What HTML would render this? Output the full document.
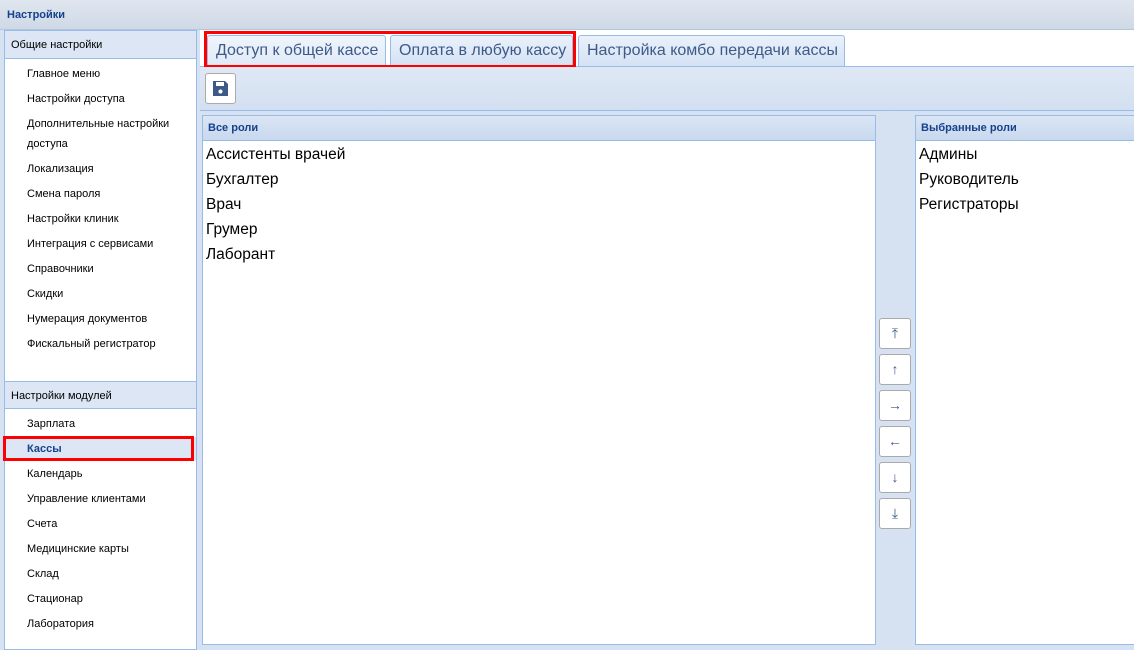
<!DOCTYPE html>
<html><head><meta charset="utf-8"><style>
*{box-sizing:border-box;margin:0;padding:0}
body{width:1134px;height:638px;overflow:hidden;background:#d6e2f1;font-family:"Liberation Sans",sans-serif;position:relative}
.abs{position:absolute}
.title{left:0;top:0;width:1134px;height:30px;background:linear-gradient(#dfe6ef,#cfd9e6);border-bottom:1px solid #b6c6da}
.title span{position:absolute;left:7px;top:9px;font-size:11px;font-weight:bold;color:#15428b}
.left{left:4px;top:30px;width:193px;height:620px;background:#fff;border:1px solid #99bbe8}
.hdr{position:absolute;left:0;width:191px;height:28px;background:#dce6f4;border-bottom:1px solid #99bbe8;font-size:11px;color:#000;padding:8px 0 0 6px}
.it{position:absolute;left:22px;font-size:11px;color:#000}
.tabbar{left:200px;top:30px;width:934px;height:37px;background:#fff;border-bottom:1px solid #99bbe8}
.tab{position:absolute;top:5px;height:31px;background:linear-gradient(#eaf1fb,#d4e2f4);border:1px solid #99bbe8;border-bottom:none;border-radius:3px 3px 0 0;font-size:16px;color:#3d5a87;padding:6px 0 0 8px;white-space:nowrap}
.tb{left:200px;top:67px;width:934px;height:44px;background:linear-gradient(#dfe8f5,#d3e0f1);border-bottom:1px solid #99bbe8}
.grid{background:#fff;border:1px solid #99bbe8}
.gh{height:25px;background:linear-gradient(#dbe6f5,#c8d8ee);border-bottom:1px solid #99bbe8;font-size:11px;font-weight:bold;color:#15428b;padding:6px 0 0 5px}
.row{font-size:15.5px;color:#000;padding-left:3px;height:25px;line-height:25px}
.btn{position:absolute;left:879px;width:32px;height:31px;background:#fff;border:1px solid #aaa;border-radius:3px;color:#3d5a87;font-size:14px;text-align:center;line-height:29px}
.red{border:3px solid #f00}
</style></head><body>
<div class="abs title"><span>Настройки</span></div>
<div class="abs left">
<div class="hdr" style="top:0">Общие настройки</div>
<div class="it" style="top:37px">Главное меню</div>
<div class="it" style="top:62px">Настройки доступа</div>
<div class="it" style="line-height:20px;top:83px">Дополнительные настройки<br>доступа</div>
<div class="it" style="top:132px">Локализация</div>
<div class="it" style="top:157px">Смена пароля</div>
<div class="it" style="top:182px">Настройки клиник</div>
<div class="it" style="top:207px">Интеграция с сервисами</div>
<div class="it" style="top:232px">Справочники</div>
<div class="it" style="top:257px">Скидки</div>
<div class="it" style="top:282px">Нумерация документов</div>
<div class="it" style="top:307px">Фискальный регистратор</div>
<div class="hdr" style="top:350px;border-top:1px solid #99bbe8">Настройки модулей</div>
<div class="it" style="top:387px">Зарплата</div>
<div style="position:absolute;left:0;top:406px;width:191px;height:24px;background:#dce6f4"></div>
<div class="it" style="top:412px;font-weight:bold;color:#15428b">Кассы</div>
<div class="it" style="top:437px">Календарь</div>
<div class="it" style="top:462px">Управление клиентами</div>
<div class="it" style="top:487px">Счета</div>
<div class="it" style="top:512px">Медицинские карты</div>
<div class="it" style="top:537px">Склад</div>
<div class="it" style="top:562px">Стационар</div>
<div class="it" style="top:587px">Лаборатория</div>
</div>
<div class="abs red" style="left:3px;top:436px;width:191px;height:25px"></div>
<div class="abs tabbar">
<div class="tab" style="left:7px;width:179px;background:linear-gradient(#f0f5fc,#dfe9f7)">Доступ к общей кассе</div>
<div class="tab" style="left:190px;width:183px">Оплата в любую кассу</div>
<div class="tab" style="left:378px;width:267px">Настройка комбо передачи кассы</div>
</div>
<div class="abs red" style="left:204px;top:31px;width:372px;height:37px"></div>
<div class="abs tb"><div style="position:absolute;left:5px;top:6px;width:31px;height:31px;background:#fff;border:1px solid #aaa;border-radius:3px">
<svg width="29" height="29" viewBox="0 0 29 29"><path d="M7 7h12l3 3v12H7z" fill="#3d5a87"/><rect x="10" y="8" width="8" height="4" fill="#fff"/><circle cx="14.5" cy="17.5" r="2" fill="#fff"/></svg></div></div>
<div class="abs grid" style="left:202px;top:115px;width:674px;height:530px"><div class="gh">Все роли</div>
<div style="padding-top:1px"><div class="row">Ассистенты врачей</div><div class="row">Бухгалтер</div><div class="row">Врач</div><div class="row">Грумер</div><div class="row">Лаборант</div></div></div>
<div class="abs grid" style="left:915px;top:115px;width:225px;height:530px"><div class="gh">Выбранные роли</div>
<div style="padding-top:1px"><div class="row">Админы</div><div class="row">Руководитель</div><div class="row">Регистраторы</div></div></div>
<div class="btn" style="top:318px">⤒</div>
<div class="btn" style="top:354px">↑</div>
<div class="btn" style="top:390px">→</div>
<div class="btn" style="top:426px">←</div>
<div class="btn" style="top:462px">↓</div>
<div class="btn" style="top:498px">⤓</div>
</body></html>
